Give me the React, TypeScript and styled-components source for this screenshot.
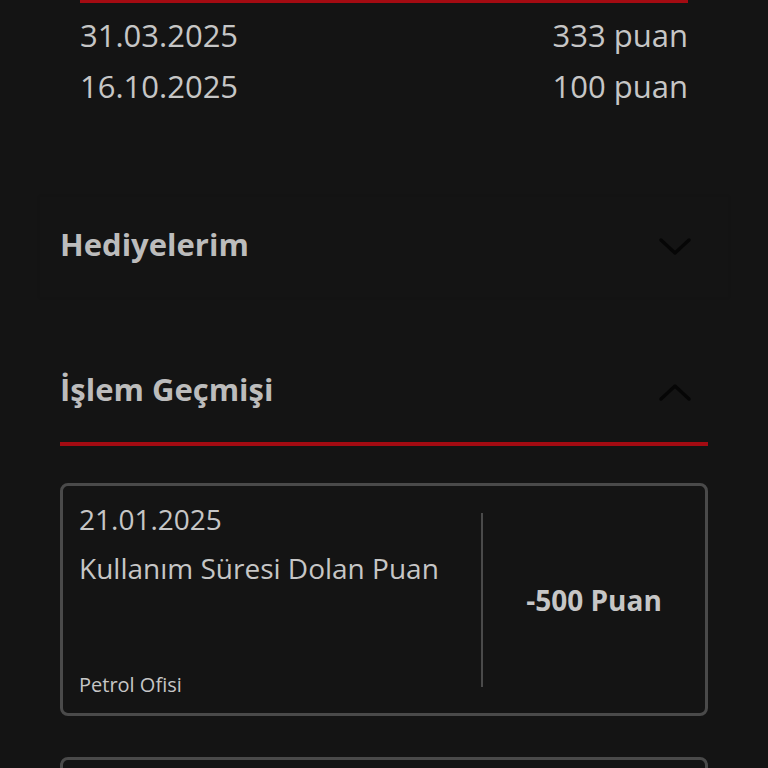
import React from 'react';
import styled, { createGlobalStyle } from 'styled-components';

const GlobalStyle = createGlobalStyle`
    html, body {
        margin: 0;
        padding: 0;
        background: #141414;
    }
    body {
        font-family: 'Open Sans', 'Noto Sans', sans-serif;
        color: #c4c4c4;
    }
`;

const colors = {
    bg: '#141414',
    text: '#c6c6c6',
    heading: '#bcbcbc',
    red: '#a30b12',
    border: '#4a4a4a',
    chevron: '#060606',
};

const points = [
    { date: '31.03.2025', amount: '333 puan' },
    { date: '16.10.2025', amount: '100 puan' },
];

const history = [
    { date: '21.01.2025', title: 'Kullanım Süresi Dolan Puan', source: 'Petrol Ofisi', amount: '-500 Puan' },
    { date: '14.01.2025', title: 'Kazanılan Puan', source: 'Petrol Ofisi', amount: '+120 Puan' },
];

const Chevron = ({ up }: { up?: boolean }) => (
    <svg width="34" height="20" viewBox="0 0 34 20" fill="none">
        <path
            d={up ? 'M3 17 L17 4 L31 17' : 'M3 3 L17 16 L31 3'}
            stroke={colors.chevron}
            strokeWidth="3.5"
            strokeLinecap="round"
            strokeLinejoin="round"
        />
    </svg>
);

const App = () => {
    return (
        <>
            <GlobalStyle />
            <Page>
                <Panel>
                    <PointList>
                        {points.map((p) => (
                            <PointRow key={p.date}>
                                <span>{p.date}</span>
                                <span>{p.amount}</span>
                            </PointRow>
                        ))}
                    </PointList>
                </Panel>

                <AccordionPanel>
                    <Header>
                        <Title>Hediyelerim</Title>
                        <IconBox>
                            <Chevron />
                        </IconBox>
                    </Header>
                </AccordionPanel>

                <HistoryPanel>
                    <Header $open>
                        <Title>İşlem Geçmişi</Title>
                        <IconBox>
                            <Chevron up />
                        </IconBox>
                    </Header>
                    <CardList>
                        {history.map((h) => (
                            <Card key={h.date}>
                                <CardInfo>
                                    <CardDate>{h.date}</CardDate>
                                    <CardTitle>{h.title}</CardTitle>
                                    <CardSource>{h.source}</CardSource>
                                </CardInfo>
                                <Divider />
                                <CardAmount>{h.amount}</CardAmount>
                            </Card>
                        ))}
                    </CardList>
                </HistoryPanel>
            </Page>
        </>
    );
};

const Page = styled.div`
    width: 768px;
    height: 768px;
    overflow: hidden;
    box-sizing: border-box;
    padding: 0 40px;
    background: ${colors.bg};
`;

const Panel = styled.section`
    padding: 0 40px;
`;

const PointList = styled.div`
    border-top: 3px solid ${colors.red};
    padding-top: 6px;
`;

const PointRow = styled.div`
    display: flex;
    justify-content: space-between;
    align-items: center;
    height: 51px;
    font-size: 31px;
    color: ${colors.text};
`;

const AccordionPanel = styled.section`
    margin-top: 86px;
    padding: 0 20px;
    box-shadow: 0 0 4px rgba(0, 0, 0, 0.08);
`;

const HistoryPanel = styled.section`
    margin-top: 45px;
    padding: 0 20px;
`;

const Header = styled.div<{ $open?: boolean }>`
    display: flex;
    align-items: center;
    justify-content: space-between;
    height: 100px;
    border-bottom: ${({ $open }) => ($open ? `4px solid ${colors.red}` : 'none')};
`;

const Title = styled.h2`
    margin: 0 0 6px;
    font-size: 31px;
    line-height: 40px;
    font-weight: 700;
    color: ${colors.heading};
`;

const IconBox = styled.div`
    display: flex;
    align-items: center;
    justify-content: center;
    margin-right: 16px;
`;

const CardList = styled.div`
    display: flex;
    flex-direction: column;
    gap: 41px;
    margin-top: 37px;
`;

const Card = styled.div`
    display: flex;
    height: 233px;
    box-sizing: border-box;
    border: 3px solid ${colors.border};
    border-radius: 8px;
`;

const CardInfo = styled.div`
    width: 418px;
    box-sizing: border-box;
    display: flex;
    flex-direction: column;
    padding: 15px 16px 14px 16px;
`;

const CardDate = styled.div`
    font-size: 28px;
    line-height: 36px;
    color: ${colors.text};
`;

const CardTitle = styled.div`
    margin-top: 13px;
    font-size: 28px;
    line-height: 36px;
    color: ${colors.text};
`;

const CardSource = styled.div`
    margin-top: auto;
    font-size: 20px;
    line-height: 28px;
    color: ${colors.text};
`;

const Divider = styled.div`
    width: 2px;
    margin: 27px 0 26px;
    background: ${colors.border};
`;

const CardAmount = styled.div`
    flex: 1;
    display: flex;
    align-items: center;
    justify-content: center;
    font-size: 28px;
    font-weight: 700;
    color: ${colors.text};
`;

export default App;
